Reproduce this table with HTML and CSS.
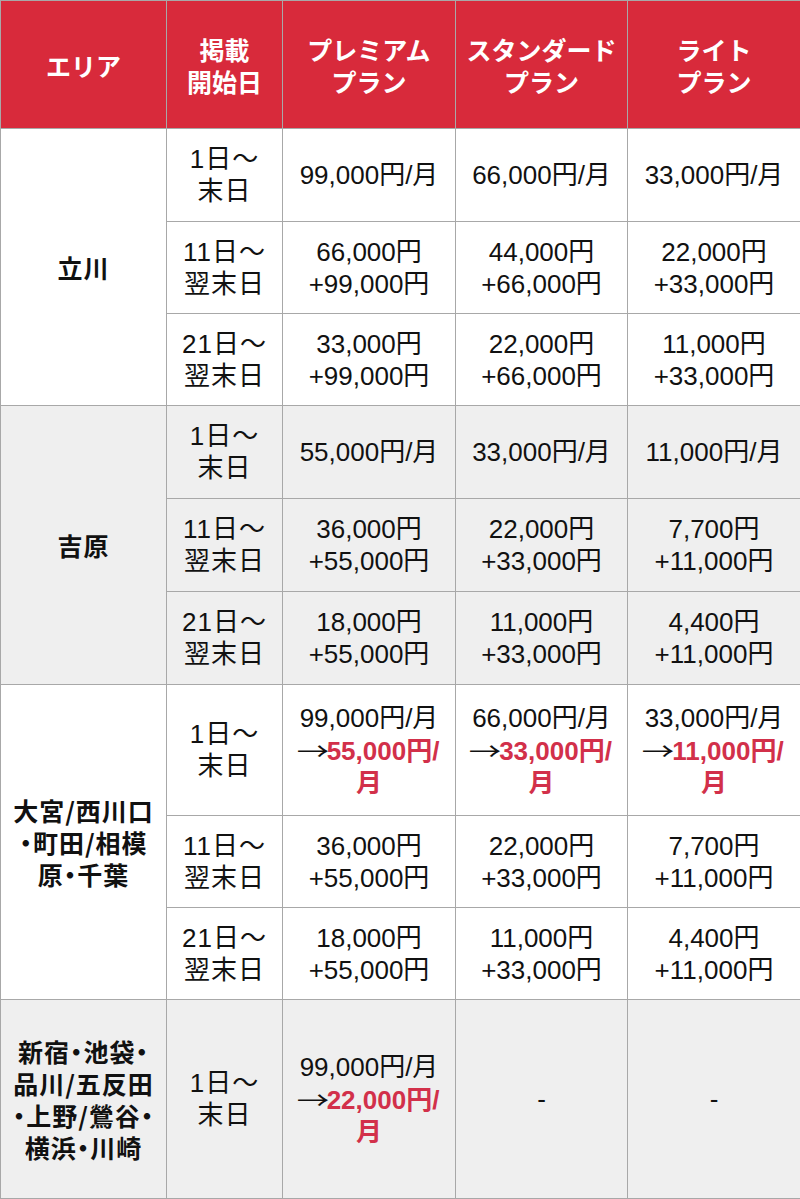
FILE: index.html
```html
<!DOCTYPE html>
<html lang="ja">
<head>
<meta charset="utf-8">
<link rel="stylesheet" href="styles.css">
</head>
<body>
<table class="price">
  <colgroup>
    <col class="c-area"><col class="c-date"><col class="c-plan"><col class="c-plan2"><col class="c-plan">
  </colgroup>
  <thead>
    <tr class="h-head">
      <th>エリア</th>
      <th>掲載<br>開始日</th>
      <th>プレミアム<br>プラン</th>
      <th>スタンダード<br>プラン</th>
      <th>ライト<br>プラン</th>
    </tr>
  </thead>
  <tbody class="white">
    <tr class="h-row1">
      <td class="area" rowspan="3">立川</td>
      <td class="date">1日～<br>末日</td>
      <td>99,000円/月</td>
      <td>66,000円/月</td>
      <td>33,000円/月</td>
    </tr>
    <tr class="h-row">
      <td class="date">11日～<br>翌末日</td>
      <td>66,000円<br>+99,000円</td>
      <td>44,000円<br>+66,000円</td>
      <td>22,000円<br>+33,000円</td>
    </tr>
    <tr class="h-row">
      <td class="date">21日～<br>翌末日</td>
      <td>33,000円<br>+99,000円</td>
      <td>22,000円<br>+66,000円</td>
      <td>11,000円<br>+33,000円</td>
    </tr>
  </tbody>
  <tbody class="grey">
    <tr class="h-row1">
      <td class="area" rowspan="3">吉原</td>
      <td class="date">1日～<br>末日</td>
      <td>55,000円/月</td>
      <td>33,000円/月</td>
      <td>11,000円/月</td>
    </tr>
    <tr class="h-row1">
      <td class="date">11日～<br>翌末日</td>
      <td>36,000円<br>+55,000円</td>
      <td>22,000円<br>+33,000円</td>
      <td>7,700円<br>+11,000円</td>
    </tr>
    <tr class="h-row1">
      <td class="date">21日～<br>翌末日</td>
      <td>18,000円<br>+55,000円</td>
      <td>11,000円<br>+33,000円</td>
      <td>4,400円<br>+11,000円</td>
    </tr>
  </tbody>
  <tbody class="white">
    <tr class="h-tall">
      <td class="area" rowspan="3">大宮/西川口<br>・町田/相模<br>原・千葉</td>
      <td class="date">1日～<br>末日</td>
      <td>99,000円/月<br><span class="arrow">→</span><span class="sale">55,000円/<br>月</span></td>
      <td>66,000円/月<br><span class="arrow">→</span><span class="sale">33,000円/<br>月</span></td>
      <td>33,000円/月<br><span class="arrow">→</span><span class="sale">11,000円/<br>月</span></td>
    </tr>
    <tr class="h-row">
      <td class="date">11日～<br>翌末日</td>
      <td>36,000円<br>+55,000円</td>
      <td>22,000円<br>+33,000円</td>
      <td>7,700円<br>+11,000円</td>
    </tr>
    <tr class="h-row">
      <td class="date">21日～<br>翌末日</td>
      <td>18,000円<br>+55,000円</td>
      <td>11,000円<br>+33,000円</td>
      <td>4,400円<br>+11,000円</td>
    </tr>
  </tbody>
  <tbody class="grey">
    <tr class="h-last">
      <td class="area">新宿・池袋・<br>品川/五反田<br>・上野/鶯谷・<br>横浜・川崎</td>
      <td class="date">1日～<br>末日</td>
      <td>99,000円/月<br><span class="arrow">→</span><span class="sale">22,000円/<br>月</span></td>
      <td>-</td>
      <td>-</td>
    </tr>
  </tbody>
</table>
</body>
</html>
```
FILE: styles.css
```css
html, body {
  margin: 0;
  padding: 0;
  background: #ffffff;
}
.price {
  width: 800px;
  border-collapse: collapse;
  table-layout: fixed;
  font-family: "Liberation Sans", "Noto Sans CJK JP", sans-serif;
  font-size: 26px;
  line-height: 32px;
  color: #111111;
}
.c-area { width: 166px; }
.c-date { width: 116px; }
.c-plan { width: 173px; }
.c-plan2 { width: 172px; }
.price th, .price td {
  border: 1px solid #a8a8a8;
  text-align: center;
  vertical-align: middle;
  padding: 0;
  white-space: nowrap;
}
.price th {
  background: #d82a3b;
  color: #ffffff;
  font-weight: bold;
  font-family: "Noto Sans CJK JP", sans-serif;
  font-size: 25px;
  line-height: 32px;
}
.white td { background: #ffffff; }
.grey td { background: #efefef; }
.date {
  letter-spacing: 1px;
}
.area {
  font-family: "Noto Sans CJK JP", sans-serif;
  font-weight: bold;
  font-size: 25px;
  line-height: 32px;
  font-feature-settings: "palt";
  letter-spacing: 1px;
}
.arrow {
  display: inline-block;
  width: 28px;
  font-family: "Noto Sans CJK JP", sans-serif;
  font-size: 24px;
  transform: scaleX(1.35);
}
.sale {
  color: #d2304a;
  font-weight: bold;
}
.h-head { height: 128px; }
.h-row1 { height: 93px; }
.h-row { height: 92px; }
.h-tall { height: 131px; }
.h-last { height: 199px; }
```
